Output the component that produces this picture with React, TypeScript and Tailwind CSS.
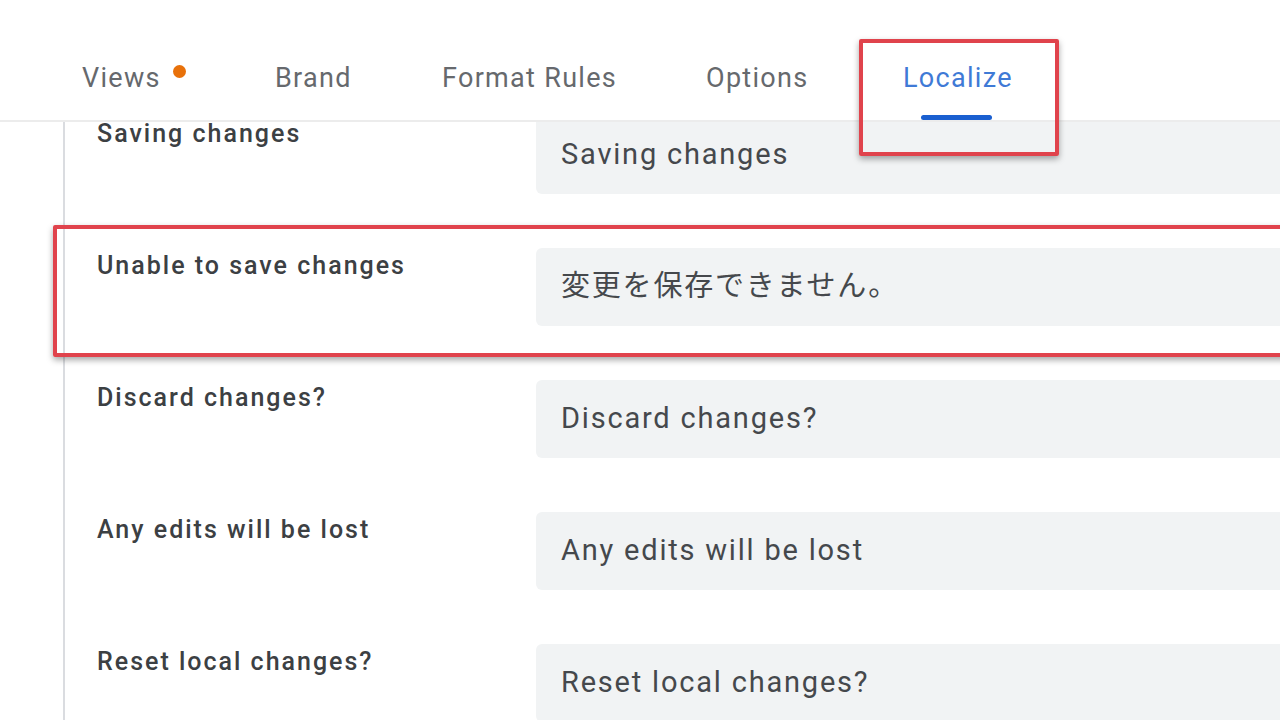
const tabs = [
  { label: 'Views', width: 'w-[193px]', dot: true },
  { label: 'Brand', width: 'w-[167px]' },
  { label: 'Format Rules', width: 'w-[264px]' },
  { label: 'Options', width: 'w-[197px]' },
  { label: 'Localize', width: 'w-[150px]', active: true },
];

const rows = [
  { label: 'Saving changes', value: 'Saving changes' },
  { label: 'Unable to save changes', value: '変更を保存できません。' },
  { label: 'Discard changes?', value: 'Discard changes?' },
  { label: 'Any edits will be lost', value: 'Any edits will be lost' },
  { label: 'Reset local changes?', value: 'Reset local changes?' },
];

export default function App() {
  return (
    <div
      className="relative h-[720px] w-[1280px] overflow-hidden bg-white"
      style={{ fontFamily: 'Roboto, "Noto Sans CJK JP", sans-serif' }}
    >
      {/* tab bar */}
      <div className="relative z-10 flex h-[122px] items-start border-b-2 border-[#ececec] bg-white pl-[82px] pt-[61px]">
        {tabs.map((t) => (
          <div key={t.label} className={`relative flex ${t.width} h-[59px] items-start`}>
            <span
              className={`text-[27px] leading-[34px] tracking-[1.3px] ${t.active ? 'text-[#3f7ad6]' : 'text-[#66696d]'}`}
            >
              {t.label}
            </span>
            {t.dot && (
              <span className="ml-[12px] mt-[4px] h-[13px] w-[13px] rounded-full bg-[#e8710a]" />
            )}
            {t.active && (
              <span className="absolute bottom-[0px] left-[18px] h-[5px] w-[71px] rounded-full bg-[#1a5fd0]" />
            )}
          </div>
        ))}
      </div>

      {/* content */}
      <div className="-mt-[6px] flex">
        <div className="w-[65px] shrink-0 border-r-2 border-[#dadce0]" />
        <div className="flex flex-col gap-[54px] pl-[32px]">
          {rows.map((r) => (
            <div key={r.label} className="flex">
              <div className="w-[439px] shrink-0 pt-[3px] text-[25px] font-medium leading-[30px] tracking-[2px] text-[#3c4043]">
                {r.label}
              </div>
              <div className="flex h-[78px] w-[800px] shrink-0 items-center rounded-[6px] bg-[#f1f3f4] pl-[25px] text-[29px] tracking-[1.8px] text-[#45484c]">
                {r.value}
              </div>
            </div>
          ))}
        </div>
      </div>

      {/* annotation boxes */}
      <div className="absolute left-[859px] top-[39px] z-20 h-[117px] w-[200px] rounded-[2px] border-4 border-[#e0434c] shadow-[0_3px_6px_rgba(0,0,0,0.35)]" />
      <div className="absolute left-[53px] top-[225px] z-20 h-[132px] w-[1260px] rounded-[2px] border-4 border-[#e0434c] shadow-[0_3px_6px_rgba(0,0,0,0.35)]" />
    </div>
  );
}
